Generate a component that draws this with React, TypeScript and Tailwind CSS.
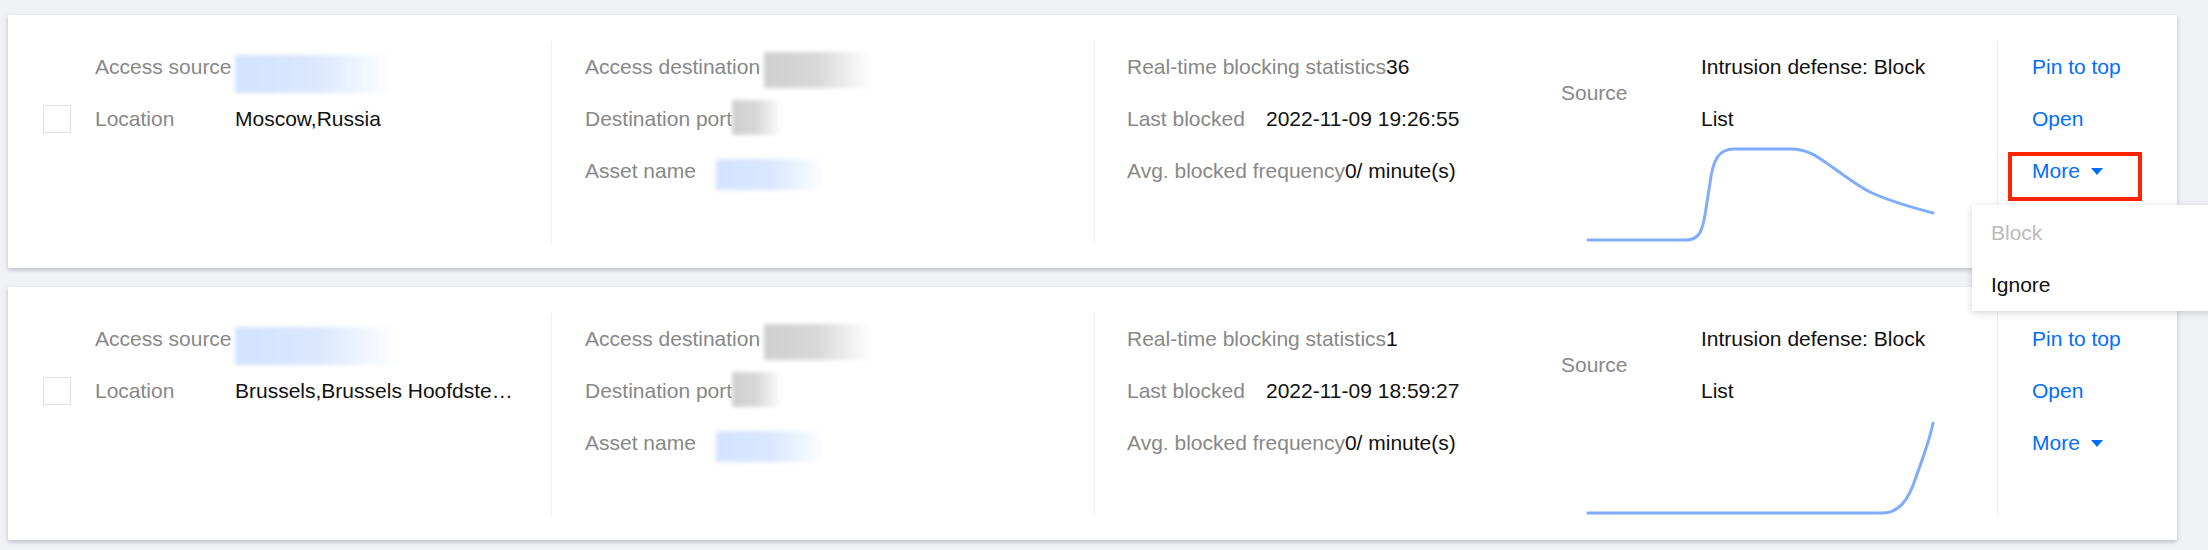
import React from "react";

type Item = {
  stats: string;
  lastBlocked: string;
  location: string;
  srcBlur: number;
  chart: string;
  open?: boolean;
};

const items: Item[] = [
  {
    stats: "36",
    lastBlocked: "2022-11-09 19:26:55",
    location: "Moscow,Russia",
    srcBlur: 160,
    chart:
      "M2 95 L100 95 C112 95 116 88 119 70 L124 38 C127 14 133 4 148 4 L205 4 C222 4 232 12 246 22 C262 33 272 41 284 47 C305 57 328 63 347 68",
    open: true,
  },
  {
    stats: "1",
    lastBlocked: "2022-11-09 18:59:27",
    location: "Brussels,Brussels Hoofdstedelijk Gewest",
    srcBlur: 165,
    chart: "M2 96 L296 96 C312 96 322 85 330 60 C338 38 344 22 347 6",
  },
];

function Blur({ w, h = 34, gray, mt = 0 }: { w: number; h?: number; gray?: boolean; mt?: number }) {
  return (
    <span
      className={
        "inline-block shrink-0 bg-linear-to-r blur-[2px] " +
        (gray ? "from-[#cfcfcf] via-[#d8d8d8] to-transparent" : "from-[#d2e2ff] via-[#dbe7ff] to-transparent")
      }
      style={{ width: w, height: h, marginTop: mt }}
    />
  );
}

function Card({ item }: { item: Item }) {
  return (
    <div className="flex w-[2169px] bg-white pt-[26px] pb-[25px] shadow-[0_2px_4px_rgba(54,58,80,0.28)]">
      {/* col 1 */}
      <div className="flex h-[202px] w-[543px] shrink-0 pl-[35px]">
        <div className="mt-[64px] h-[28px] w-[28px] shrink-0 border border-[#dcdfe6] bg-white" />
        <div className="ml-[24px] flex flex-col">
          <div className="flex h-[52px] items-center">
            <span className="w-[140px] shrink-0 overflow-hidden whitespace-nowrap text-[#888]">Access source</span>
            <Blur w={item.srcBlur} h={38} mt={14} />
          </div>
          <div className="flex h-[52px] items-center">
            <span className="w-[140px] shrink-0 text-[#888]">Location</span>
            <span className="w-[285px] overflow-hidden text-ellipsis whitespace-nowrap text-[#111]">{item.location}</span>
          </div>
        </div>
      </div>

      {/* col 2 */}
      <div className="flex h-[202px] w-[543px] shrink-0 flex-col border-l border-[#eceef2] pl-[33px]">
        <div className="flex h-[52px] items-center">
          <span className="text-[#888]">Access destination</span>
          <span className="ml-[4px]">
            <Blur w={108} h={36} gray mt={10} />
          </span>
        </div>
        <div className="flex h-[52px] items-center">
          <span className="text-[#888]">Destination port</span>
          <Blur w={50} h={35} gray mt={-4} />
        </div>
        <div className="flex h-[52px] items-center">
          <span className="w-[131px] shrink-0 text-[#888]">Asset name</span>
          <Blur w={110} h={31} mt={6} />
        </div>
      </div>

      {/* col 3 */}
      <div className="flex h-[202px] w-[903px] shrink-0 border-l border-[#eceef2]">
        <div className="flex w-[466px] shrink-0 flex-col pl-[32px]">
          <div className="flex h-[52px] items-center whitespace-nowrap">
            <span className="text-[#888]">Real-time blocking statistics</span>
            <span className="text-[#111]">{item.stats}</span>
          </div>
          <div className="flex h-[52px] items-center whitespace-nowrap">
            <span className="w-[139px] shrink-0 text-[#888]">Last blocked</span>
            <span className="text-[#111]">{item.lastBlocked}</span>
          </div>
          <div className="flex h-[52px] items-center whitespace-nowrap">
            <span className="text-[#888]">Avg. blocked frequency</span>
            <span className="text-[#111]">0/ minute(s)</span>
          </div>
        </div>
        <div className="flex w-[436px] shrink-0 flex-col">
          <div className="flex h-[104px]">
            <span className="w-[140px] shrink-0 self-center text-[#888]">Source</span>
            <div className="flex flex-col text-[#111]">
              <div className="flex h-[52px] items-center whitespace-nowrap">Intrusion defense: Block</div>
              <div className="flex h-[52px] items-center">List</div>
            </div>
          </div>
          <svg width="350" height="98" viewBox="0 0 350 98" className="ml-[25px]">
            <path d={item.chart} fill="none" stroke="#80acff" strokeWidth="3" strokeLinecap="round" strokeLinejoin="round" />
          </svg>
        </div>
      </div>

      {/* col 4 */}
      <div className="flex h-[202px] w-[180px] shrink-0 flex-col border-l border-[#eceef2] pl-[34px] text-[#006eff]">
        <div className="flex h-[52px] items-center">Pin to top</div>
        <div className="flex h-[52px] items-center">Open</div>
        <div className="relative flex h-[52px] items-center">
          <span>More</span>
          <span className="ml-[11px] h-0 w-0 border-x-[6px] border-t-[7px] border-x-transparent border-t-[#006eff]" />
          {item.open && (
            <>
              <div className="absolute left-[-24px] top-[7px] h-[49px] w-[134px] border-[4px] border-[#ff2400]" />
              <div className="absolute left-[-60px] top-[60px] z-10 flex w-[260px] flex-col bg-white pt-[2px] shadow-[0_2px_8px_rgba(0,0,0,0.16)]">
                <div className="flex h-[52px] items-center pl-[19px] text-[#bbb]">Block</div>
                <div className="flex h-[52px] items-center pl-[19px] text-[#111]">Ignore</div>
              </div>
            </>
          )}
        </div>
      </div>
    </div>
  );
}

export default function App() {
  return (
    <div className="h-[550px] w-[2208px] overflow-hidden bg-[#f1f2f6] pl-[8px] pt-[15px] font-['Liberation_Sans',Arial,sans-serif] text-[21px] leading-[24px]">
      <div className="flex flex-col gap-[19px]">
        {items.map((it, i) => (
          <Card key={i} item={it} />
        ))}
      </div>
    </div>
  );
}
